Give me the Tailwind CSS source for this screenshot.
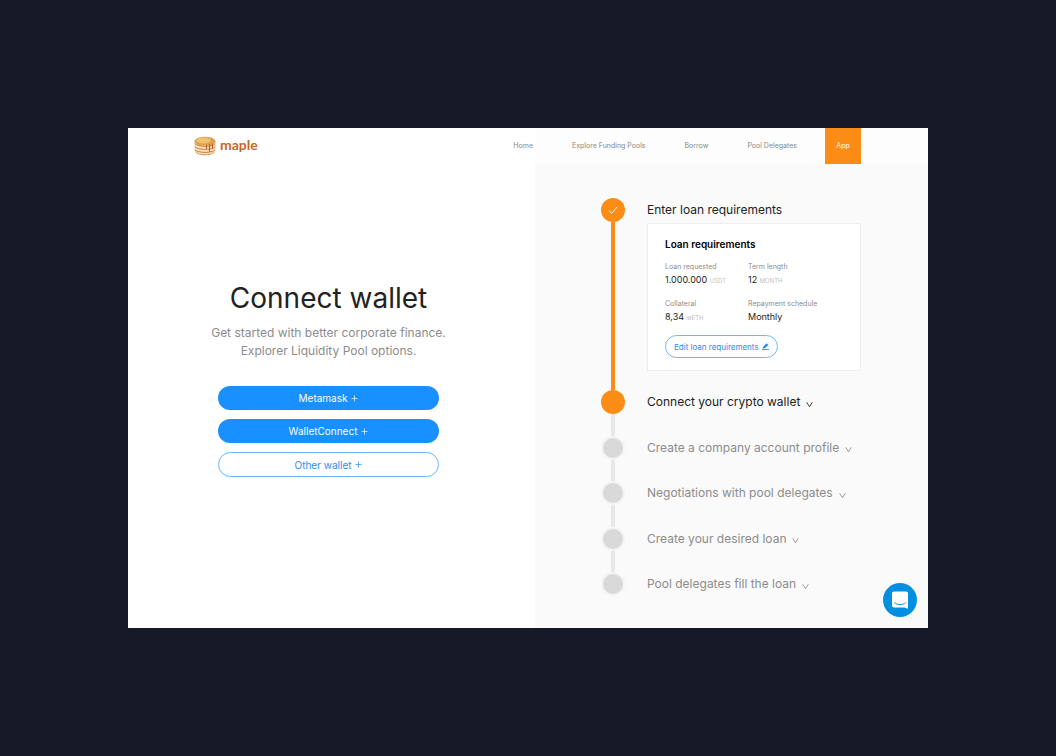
<!DOCTYPE html>
<html lang="en">
<head>
<meta charset="utf-8">
<meta name="viewport" content="width=device-width, initial-scale=1">
<title>Maple – Connect wallet</title>
<script src="https://cdn.jsdelivr.net/npm/@tailwindcss/browser@4"></script>
</head>
<body class="flex min-h-screen flex-col bg-[#161a28] p-32 font-['Inter','Liberation_Sans',sans-serif] text-[#222]">
<svg class="hidden" aria-hidden="true">
  <symbol id="chevron" viewBox="0 0 8 8"><path d="M.8 1.500 4 6.500 7.200 1.500" fill="none" stroke="currentColor"/></symbol>
  <symbol id="plus" viewBox="0 0 8 8"><path d="M4 .5v7M.5 4h7" fill="none" stroke="currentColor" stroke-width=".8"/></symbol>
</svg>
<div class="relative flex flex-1 flex-col bg-white">
  <header class="flex h-9 bg-linear-to-r from-white from-51% to-[#fdfdfd] to-51% pr-[67px] pl-[66px]">
    <a href="#" class="flex items-center gap-1 text-[#c8652c]" aria-label="maple home">
      <svg class="h-5 w-[22px]" viewBox="0 0 22 20" aria-hidden="true">
        <path d="M.5 5.500v9C1 17.500 6 19.300 11 19.300s10-1.800 10.500-4.800v-9z" fill="#fbe5c0"/>
        <g fill="none" stroke="#c9763a">
          <path d="M.7 7.500C3 11 18 11.500 21.300 7.500"/>
          <path d="M.7 10.700C3 14 18 14.500 21.300 10.700"/>
          <path d="M.9 13.700C3 17 18 17.500 21.100 13.700"/>
          <path d="M1.500 16C5 19.700 17 19.700 20.500 16" stroke="#dc9a51"/>
        </g>
        <ellipse cx="11" cy="5.300" rx="10.500" ry="4.500" fill="#dda049"/>
        <ellipse cx="9.500" cy="4.500" rx="7.500" ry="2.900" fill="#efc272"/>
        <path d="M12.500 9.500v3M15.500 8.500v7M18.500 8v4.500" fill="none" stroke="#b85a2b" stroke-linecap="round"/>
      </svg>
      <span class="pb-0.5 font-['Lato',sans-serif] text-[14px] leading-4 font-bold">maple</span>
    </a>
    <nav class="ml-auto flex items-center gap-[39px] text-[7px] text-[#888]">
      <a href="#">Home</a>
      <a href="#">Explore Funding Pools</a>
      <a href="#">Borrow</a>
      <a href="#">Pool Delegates</a>
      <a href="#" class="-ml-[11px] flex w-9 items-center justify-center self-stretch bg-[#fb8c16] text-white">App</a>
    </nav>
  </header>
  <main class="flex flex-1">
    <section class="flex w-[50.875%] flex-col items-center pt-[114px] pr-1.5 text-center">
      <h1 class="text-[28px] leading-10">Connect wallet</h1>
      <p class="mt-1.5 text-[12px] leading-[18px] text-[#8c8c8c]">Get started with better corporate finance.<br>Explorer Liquidity Pool options.</p>
      <div class="mt-[26px] flex w-[221px] flex-col gap-[9px] text-[10px] leading-4">
        <button class="flex h-6 items-center justify-center gap-1 rounded-full bg-[#1890ff] text-white">Metamask <svg class="size-[7px]"><use href="#plus"/></svg></button>
        <button class="flex h-6 items-center justify-center gap-1 rounded-full bg-[#1890ff] text-white">WalletConnect <svg class="size-[7px]"><use href="#plus"/></svg></button>
        <button class="flex h-[25px] items-center justify-center gap-1 rounded-full border border-[#6ab7fc] text-[#1890ff]">Other wallet <svg class="size-[7px]"><use href="#plus"/></svg></button>
      </div>
    </section>
    <section class="flex flex-1 flex-col bg-[#fafafa] pt-[34px] pr-[67px] pb-2.5 pl-[66px]">
      <ol class="flex flex-1 flex-col text-[12px] leading-6 text-[#8c8c8c]">
        <li class="flex gap-[22px] text-[#222]">
          <div class="flex w-6 flex-col items-center">
            <span class="flex size-6 items-center justify-center rounded-full bg-[#fb8c16]"><svg class="size-[10px]" viewBox="0 0 10 10" aria-hidden="true"><path d="M1 5.500 3.600 8.500 9 2" fill="none" stroke="#fff"/></svg></span>
            <span class="w-1 flex-1 bg-[#fb8c16]"></span>
          </div>
          <div class="flex-1">
            <h2>Enter loan requirements</h2>
            <div class="mt-px mb-[19px] border border-[#eee] bg-white px-[17px] pt-3 pb-3">
              <h3 class="text-[10px] leading-4 font-semibold text-black">Loan requirements</h3>
              <dl class="mt-[9px] grid grid-cols-[83px_1fr] gap-y-[11px] text-[9px] leading-[13px]">
                <div><dt class="text-[7px] leading-3 text-[#8c8c8c]">Loan requested</dt><dd>1.000.000 <span class="text-[6px] text-[#bfbfbf]">USDT</span></dd></div>
                <div><dt class="text-[7px] leading-3 text-[#8c8c8c]">Term length</dt><dd>12 <span class="text-[6px] text-[#bfbfbf]">MONTH</span></dd></div>
                <div><dt class="text-[7px] leading-3 text-[#8c8c8c]">Collateral</dt><dd>8,34 <span class="text-[6px] text-[#bfbfbf]">wETH</span></dd></div>
                <div><dt class="text-[7px] leading-3 text-[#8c8c8c]">Repayment schedule</dt><dd>Monthly</dd></div>
              </dl>
              <button class="mt-[11px] flex h-[23px] items-center gap-[3px] rounded-full border border-[#6ab7fc] px-2 text-[8px] text-[#1890ff]">Edit loan requirements <svg class="size-[7px]" viewBox="0 0 8 8" aria-hidden="true"><path d="M0 7.500h8" stroke="currentColor"/><path d="M.8 6.500 1.400 4.300 5.200.4 7.300 2.400 3.300 6z" fill="currentColor"/></svg></button>
            </div>
          </div>
        </li>
        <li class="flex flex-1 gap-[22px] text-[#222]">
          <div class="flex w-6 flex-col items-center"><span class="size-6 rounded-full bg-[#fb8c16]"></span><span class="w-1 flex-1 bg-[#e8e8e8]"></span></div>
          <h2 class="flex h-6 items-center gap-1.5 whitespace-nowrap">Connect your crypto wallet <svg class="mt-1 size-[7px]"><use href="#chevron"/></svg></h2>
        </li>
        <li class="flex flex-1 gap-[22px]">
          <div class="flex w-6 flex-col items-center"><span class="size-6 rounded-full border-2 border-[#f4f4f4] bg-[#d9d9d9]"></span><span class="w-1 flex-1 bg-[#e8e8e8]"></span></div>
          <h2 class="flex h-6 items-center gap-1.5 whitespace-nowrap">Create a company account profile <svg class="mt-1 size-[7px]"><use href="#chevron"/></svg></h2>
        </li>
        <li class="flex flex-1 gap-[22px]">
          <div class="flex w-6 flex-col items-center"><span class="size-6 rounded-full border-2 border-[#f4f4f4] bg-[#d9d9d9]"></span><span class="w-1 flex-1 bg-[#e8e8e8]"></span></div>
          <h2 class="flex h-6 items-center gap-1.5 whitespace-nowrap">Negotiations with pool delegates <svg class="mt-1 size-[7px]"><use href="#chevron"/></svg></h2>
        </li>
        <li class="flex flex-1 gap-[22px]">
          <div class="flex w-6 flex-col items-center"><span class="size-6 rounded-full border-2 border-[#f4f4f4] bg-[#d9d9d9]"></span><span class="w-1 flex-1 bg-[#e8e8e8]"></span></div>
          <h2 class="flex h-6 items-center gap-1.5 whitespace-nowrap">Create your desired loan <svg class="mt-1 size-[7px]"><use href="#chevron"/></svg></h2>
        </li>
        <li class="flex flex-1 gap-[22px]">
          <div class="flex w-6 flex-col items-center"><span class="size-6 rounded-full border-2 border-[#f4f4f4] bg-[#d9d9d9]"></span></div>
          <h2 class="flex h-6 items-center gap-1.5 whitespace-nowrap">Pool delegates fill the loan <svg class="mt-1 size-[7px]"><use href="#chevron"/></svg></h2>
        </li>
      </ol>
    </section>
  </main>
  <button class="absolute right-[11px] bottom-[11px] flex size-[34px] items-center justify-center rounded-full bg-[#038fe0]" aria-label="Open chat">
    <svg class="size-[18px]" viewBox="0 0 18 18" aria-hidden="true"><path d="M3 .5h12a2 2 0 0 1 2 2v15.300L13.500 16.500H3a2 2 0 0 1-2-2v-12a2 2 0 0 1 2-2z" fill="#fff"/><path d="M3.500 11.800c3 2.500 8 2.500 11 0" fill="none" stroke="#038fe0" stroke-linecap="round"/></svg>
  </button>
</div>
</body>
</html>
